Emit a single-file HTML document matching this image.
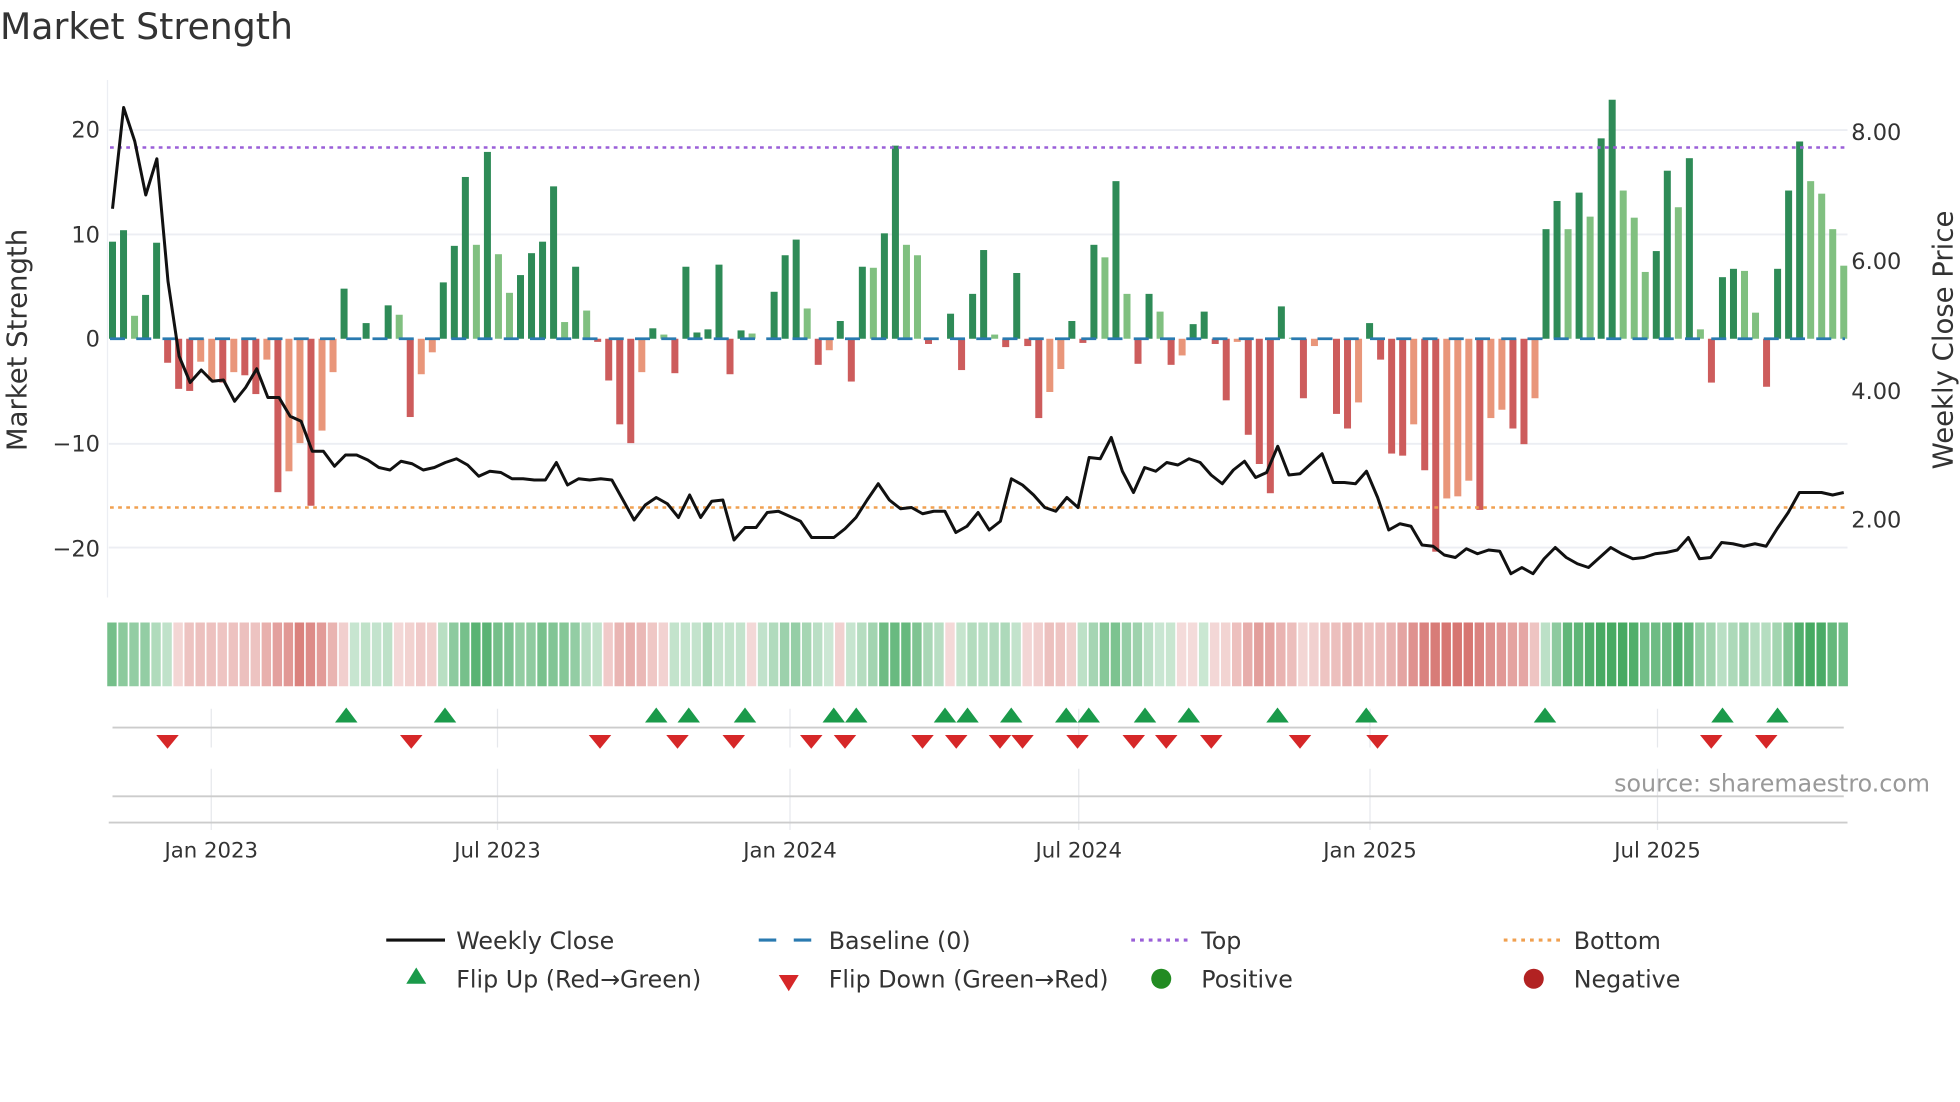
<!DOCTYPE html>
<html><head><meta charset="utf-8"><style>
html,body{margin:0;padding:0;background:#fff;width:1960px;height:1102px;overflow:hidden}
svg{display:block;font-family:"DejaVu Sans","Liberation Sans",sans-serif}
</style></head><body>
<svg id="s" width="1960" height="1102" viewBox="0 0 1568 881.6" xmlns="http://www.w3.org/2000/svg">
<text x="0" y="31" font-size="29" fill="#333">Market Strength</text>
<g id="grid"></g>
<g id="bars"></g>
<g id="heat"></g>
<g id="tri"></g>
<polyline id="price" fill="none" stroke="#111" stroke-width="2.4" stroke-linejoin="round"/>
<g font-size="18" fill="#333" text-anchor="end">
<text x="80" y="110">20</text><text x="80" y="194">10</text><text x="80" y="277">0</text>
<text x="80" y="361">−10</text><text x="80" y="445">−20</text>
</g>
<g font-size="18" fill="#333">
<text x="1481" y="112">8.00</text><text x="1481" y="215">6.00</text><text x="1481" y="319">4.00</text><text x="1481" y="422">2.00</text>
</g>
<text transform="translate(21,272) rotate(-90)" font-size="22" fill="#333" text-anchor="middle">Market Strength</text>
<text transform="translate(1562,272) rotate(-90)" font-size="22" fill="#333" text-anchor="middle">Weekly Close Price</text>
<text x="1544" y="633" font-size="19" fill="#999" text-anchor="end">source: sharemaestro.com</text>
<g font-size="17" fill="#333" text-anchor="middle">
<text x="169" y="686">Jan 2023</text><text x="398" y="686">Jul 2023</text><text x="632" y="686">Jan 2024</text>
<text x="863" y="686">Jul 2024</text><text x="1096" y="686">Jan 2025</text><text x="1326" y="686">Jul 2025</text>
</g>
<g font-size="19" fill="#333">
<line x1="309" y1="752" x2="356" y2="752" stroke="#111" stroke-width="2.5"/><text x="365" y="759">Weekly Close</text>
<line x1="607" y1="752" x2="621" y2="752" stroke="#2a7ab0" stroke-width="2.5"/><line x1="635" y1="752" x2="649" y2="752" stroke="#2a7ab0" stroke-width="2.5"/><text x="663" y="759">Baseline (0)</text>
<line x1="905" y1="752" x2="950" y2="752" stroke="#9a5fd8" stroke-width="2.5" stroke-dasharray="3,4"/><text x="961" y="759">Top</text>
<line x1="1203" y1="752" x2="1248" y2="752" stroke="#f0a050" stroke-width="2.5" stroke-dasharray="3,4"/><text x="1259" y="759">Bottom</text>
<polygon points="333,774 325,787 341,787" fill="#1a9a4a"/><text x="365" y="790">Flip Up (Red→Green)</text>
<polygon points="623,780 639,780 631,793" fill="#d62728"/><text x="663" y="790">Flip Down (Green→Red)</text>
<circle cx="929" cy="783" r="8" fill="#228b22"/><text x="961" y="790">Positive</text>
<circle cx="1227" cy="783" r="8" fill="#b22222"/><text x="1259" y="790">Negative</text>
</g>
</svg>
<script>
const NS="http://www.w3.org/2000/svg";
function el(p,t,a){const e=document.createElementNS(NS,t);for(const k in a)e.setAttribute(k,a[k]);p.appendChild(e);return e}
const B=[[9.3,'G'],[10.4,'G'],[2.2,'L'],[4.2,'G'],[9.2,'G'],[-2.3,'R'],[-4.8,'R'],[-5,'R'],[-2.2,'S'],[-4,'S'],[-4.2,'R'],[-3.2,'S'],[-3.5,'R'],[-5.3,'R'],[-2,'S'],[-14.7,'R'],[-12.7,'S'],[-10,'S'],[-16,'R'],[-8.8,'S'],[-3.2,'S'],[4.8,'G'],[0.1,'L'],[1.5,'G'],[0,'L'],[3.2,'G'],[2.3,'L'],[-7.5,'R'],[-3.4,'S'],[-1.3,'S'],[5.4,'G'],[8.9,'G'],[15.5,'G'],[9,'L'],[17.9,'G'],[8.1,'L'],[4.4,'L'],[6.1,'G'],[8.2,'G'],[9.3,'G'],[14.6,'G'],[1.6,'L'],[6.9,'G'],[2.7,'L'],[-0.3,'R'],[-4,'R'],[-8.2,'R'],[-10,'R'],[-3.2,'S'],[1,'G'],[0.4,'L'],[-3.3,'R'],[6.9,'G'],[0.6,'G'],[0.9,'G'],[7.1,'G'],[-3.4,'R'],[0.8,'G'],[0.5,'L'],[0,'L'],[4.5,'G'],[8,'G'],[9.5,'G'],[2.9,'L'],[-2.5,'R'],[-1.1,'S'],[1.7,'G'],[-4.1,'R'],[6.9,'G'],[6.8,'L'],[10.1,'G'],[18.5,'G'],[9,'L'],[8,'L'],[-0.5,'R'],[0,'L'],[2.4,'G'],[-3,'R'],[4.3,'G'],[8.5,'G'],[0.4,'L'],[-0.8,'R'],[6.3,'G'],[-0.7,'R'],[-7.6,'R'],[-5.1,'S'],[-2.9,'S'],[1.7,'G'],[-0.4,'R'],[9,'G'],[7.8,'L'],[15.1,'G'],[4.3,'L'],[-2.4,'R'],[4.3,'G'],[2.6,'L'],[-2.5,'R'],[-1.6,'S'],[1.4,'G'],[2.6,'G'],[-0.5,'R'],[-5.9,'R'],[-0.3,'S'],[-9.2,'R'],[-12,'R'],[-14.8,'R'],[3.1,'G'],[0.1,'L'],[-5.7,'R'],[-0.7,'S'],[0,'L'],[-7.2,'R'],[-8.6,'R'],[-6.1,'S'],[1.5,'G'],[-2,'R'],[-11,'R'],[-11.2,'R'],[-8.2,'S'],[-12.6,'R'],[-20.4,'R'],[-15.3,'S'],[-15.1,'S'],[-13.6,'S'],[-16.4,'R'],[-7.6,'S'],[-6.8,'S'],[-8.6,'R'],[-10.1,'R'],[-5.7,'S'],[10.5,'G'],[13.2,'G'],[10.5,'L'],[14,'G'],[11.7,'L'],[19.2,'G'],[22.9,'G'],[14.2,'L'],[11.6,'L'],[6.4,'L'],[8.4,'G'],[16.1,'G'],[12.6,'L'],[17.3,'G'],[0.9,'L'],[-4.2,'R'],[5.9,'G'],[6.7,'G'],[6.5,'L'],[2.5,'L'],[-4.6,'R'],[6.7,'G'],[14.2,'G'],[18.9,'G'],[15.1,'L'],[13.9,'L'],[10.5,'L'],[7,'L']];
const n=B.length,x0=90,x1=1475,st=(x1-x0)/(n-1),Y0=271,K=8.35;
const C={G:'#2e8b57',L:'#80c080',R:'#cd5c5c',S:'#e9967a'};
const g=document.getElementById('grid');
[104,187.5,355,438].forEach(y=>el(g,'line',{x1:87,x2:1478,y1:y,y2:y,stroke:'#eceef3','stroke-width':1.5}));
[169,398,632,863,1096,1326].forEach(x=>{el(g,'line',{x1:x,x2:x,y1:567,y2:598,stroke:'#e6e8ec'});el(g,'line',{x1:x,x2:x,y1:615,y2:664,stroke:'#e6e8ec'})});
el(g,'line',{x1:86,x2:86,y1:64,y2:478,stroke:'#eceef3'});
el(g,'line',{x1:90,x2:1475,y1:582,y2:582,stroke:'#ccc','stroke-width':1.5});
el(g,'line',{x1:90,x2:1475,y1:637,y2:637,stroke:'#ccc','stroke-width':1.5});
el(g,'line',{x1:87,x2:1478,y1:658,y2:658,stroke:'#ccc','stroke-width':1.5});
const b=document.getElementById('bars');
B.forEach((d,i)=>{const x=x0+i*st,h=Math.abs(d[0])*K;if(h>0)el(b,'rect',{x:x-2.8,y:d[0]>0?Y0-h:Y0,width:5.6,height:h,fill:C[d[1]]})});
el(b,'line',{x1:88,x2:1476,y1:271,y2:271,stroke:'#2a7ab0','stroke-width':2.2,'stroke-dasharray':'12,9'});
el(b,'line',{x1:88,x2:1476,y1:118,y2:118,stroke:'#9a5fd8','stroke-width':2,'stroke-dasharray':'3,3.5'});
el(b,'line',{x1:88,x2:1476,y1:406,y2:406,stroke:'#f0a050','stroke-width':2,'stroke-dasharray':'3,3.5'});
const h=document.getElementById('heat');
B.forEach((d,i)=>{let s=0,c=0;for(let j=i-2;j<=i+1;j++)if(j>=0&&j<n){s+=B[j][0];c++}s/=c;
 const t=Math.min(1,Math.abs(s)/15)*0.7+0.25;
 const col=s>=0?`rgba(60,165,90,${t})`:`rgba(205,85,80,${t*0.85})`;
 el(h,'rect',{x:x0-4.2+i*st,y:498,width:st-1.3,height:51,fill:col})});
const t=document.getElementById('tri');
[277,356,525,551,596,667,685,756,774,809,853,871,916,951,1022,1093,1236,1378,1422].forEach(x=>el(t,'polygon',{points:`${x},566 ${x-9},578 ${x+9},578`,fill:'#1a9a4a'}));
[134,329,480,542,587,649,676,738,765,800,818,862,907,933,969,1040,1102,1369,1413].forEach(x=>el(t,'polygon',{points:`${x-9},588 ${x+9},588 ${x},599`,fill:'#d62728'}));
const P=[167,86,113,156,127,225,285,306,296,305,304,321,310,295,318,318,333,337,361,361,373,364,364,368,374,376,369,371,376,374,370,367,372,381,377,378,383,383,384,384,370,388,383,384,383,384,400,416,404,398,403,414,396,414,401,400,432,422,422,410,409,413,417,430,430,430,423,414,400,387,400,407,406,411,409,409,426,421,410,424,417,383,388,396,406,409,398,406,366,367,350,377,394,374,377,370,372,367,370,380,387,376,369,382,378,357,380,379,371,363,386,386,387,377,398,424,419,421,436,437,444,446,439,443,440,441,459,454,459,447,438,446,451,454,446,438,443,447,446,443,442,440,430,447,446,434,435,437,435,437,423,410,394,394,394,396,394];
const m=P.length,sp=(x1-x0)/(m-1);
document.getElementById('price').setAttribute('points',P.map((y,i)=>(x0+i*sp).toFixed(1)+','+y).join(' '));
</script>
</body></html>
